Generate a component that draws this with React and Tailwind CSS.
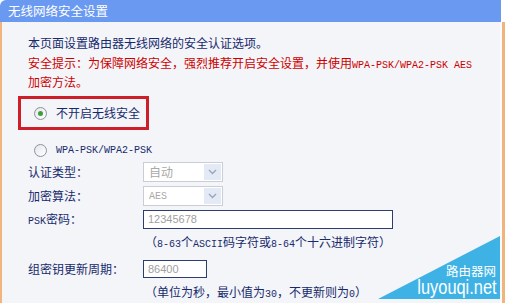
import React from "react";

const M = ({ children }) => (
  <span className="font-['Liberation_Mono',monospace] text-[10px]">{children}</span>
);

const Radio = ({ checked }) => (
  <div className="w-[13px] h-[13px] rounded-full border border-[#8b929c] bg-[linear-gradient(135deg,#e4e6ea,#ffffff)] flex items-center justify-center shrink-0">
    {checked && <div className="w-[5px] h-[5px] rounded-full bg-[#3f9e3c]" />}
  </div>
);

const Select = ({ value }) => (
  <div className="w-[80px] h-[20px] border border-[#c9cdd6] bg-white flex items-stretch">
    <div className="flex-1 pl-[5px] flex items-center text-[12px] text-[#a8a8a8]">{value}</div>
    <div className="w-[17px] m-[1px] bg-[#e3eaf5] flex items-center justify-center">
      <svg width="9" height="6" viewBox="0 0 9 6">
        <path d="M1 1 L4.5 4.5 L8 1" fill="none" stroke="#9aa6ba" strokeWidth="1.4" />
      </svg>
    </div>
  </div>
);

export default function App() {
  return (
    <div className="relative w-[505px] h-[303px] overflow-hidden bg-white font-['Noto_Sans_CJK_SC',sans-serif] text-[12px] text-[#172a6c]">
      <div className="flex flex-col h-full">
        <div className="h-[26px] w-[501px] bg-[#6a99f1] rounded-tl-[6px] flex items-center pl-[8px] text-white text-[12.5px]">
          无线网络安全设置
        </div>
        <div className="flex-1 flex">
          <div className="flex-1 bg-[#f4f5f9] border-l-2 border-[#f1b47c] border-r-2 border-r-[#fbfbfd] pl-[16px] pt-[13px] flex flex-col">
            <div className="ml-[10px] leading-[16px]">本页面设置路由器无线网络的安全认证选项。</div>
            <div className="ml-[10px] mt-[4px] leading-[16px] text-[#cc0000] w-[470px]">
              安全提示：为保障网络安全，强烈推荐开启安全设置，并使用<M>WPA-PSK/WPA2-PSK AES</M>
              <br />
              加密方法。
            </div>
            <div className="mt-[6px] w-[131px] h-[34px] border-[3px] border-[#cc1f2a] flex items-center gap-[9px] pl-[13px] text-[12px]">
              <Radio checked />
              <span>不开启无线安全</span>
            </div>
            <div className="mt-[12px] h-[16px] flex items-center gap-[9px] pl-[16px]">
              <Radio />
              <M>WPA-PSK/WPA2-PSK</M>
            </div>
            <div className="ml-[10px] mt-[4px] flex items-center h-[20px]">
              <div className="w-[115px]">认证类型：</div>
              <Select value="自动" />
            </div>
            <div className="ml-[10px] mt-[4px] flex items-center h-[20px]">
              <div className="w-[115px]">加密算法：</div>
              <Select value={<M>AES</M>} />
            </div>
            <div className="ml-[10px] mt-[4px] flex items-center h-[19px]">
              <div className="w-[115px]"><M>PSK</M>密码：</div>
              <div className="w-[250px] h-[19px] border border-[#2b3e6e] bg-white flex items-center pl-[4px] font-['Liberation_Sans',sans-serif] text-[11px] text-[#a0a0a0]">
                12345678
              </div>
            </div>
            <div className="ml-[127px] mt-[5px] leading-[16px]">
              （<M>8-63</M>个<M>ASCII</M>码字符或<M>8-64</M>个十六进制字符）
            </div>
            <div className="ml-[10px] mt-[7px] flex items-center h-[18px]">
              <div className="w-[115px]">组密钥更新周期：</div>
              <div className="w-[64px] h-[18px] border border-[#2b3e6e] bg-white flex items-center pl-[4px] font-['Liberation_Sans',sans-serif] text-[11px] text-[#a0a0a0]">
                86400
              </div>
            </div>
            <div className="ml-[127px] mt-[6px] leading-[16px]">
              （单位为秒，最小值为<M>30</M>，不更新则为<M>0</M>）
            </div>
          </div>
          <div className="w-[3px] bg-[#f1b47c]" />
        </div>
      </div>

      <svg className="absolute left-[378px] top-[236px]" width="122" height="63" viewBox="0 0 122 63">
        <polygon points="0,63 122,0 122,63" fill="#3eb2e5" />
      </svg>
      <div className="absolute right-[9px] top-[264px] text-white text-[12.5px] leading-[14px]">路由器网</div>
      <div className="absolute right-[8px] top-[278px] text-white font-['Liberation_Sans',sans-serif] text-[21px] leading-[18px] scale-x-[0.78] origin-right">
        luyouqi.net
      </div>
    </div>
  );
}
